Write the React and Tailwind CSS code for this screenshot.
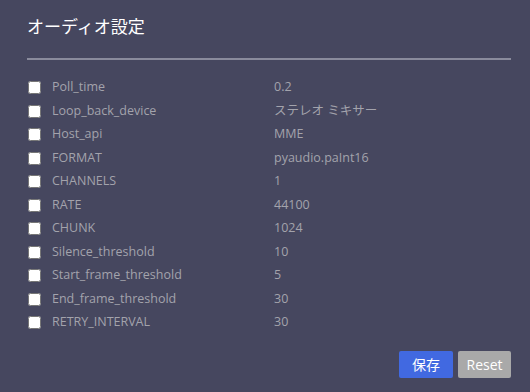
import React from "react";

const ROWS = [
  ["Poll_time", "0.2"],
  ["Loop_back_device", "ステレオ ミキサー"],
  ["Host_api", "MME"],
  ["FORMAT", "pyaudio.paInt16"],
  ["CHANNELS", "1"],
  ["RATE", "44100"],
  ["CHUNK", "1024"],
  ["Silence_threshold", "10"],
  ["Start_frame_threshold", "5"],
  ["End_frame_threshold", "30"],
  ["RETRY_INTERVAL", "30"],
];

export default function App() {
  return (
    <div
      className="w-[530px] h-[392px] bg-[#46475f] pl-[27px] pr-[19px] pt-[13px] overflow-hidden"
      style={{ fontFamily: '"Open Sans", "Noto Sans CJK JP", sans-serif' }}
    >
      <h1 className="text-[17px] leading-[26px] text-white" style={{ fontFamily: '"Noto Sans CJK JP", sans-serif' }}>
        オーディオ設定
      </h1>
      <div className="mt-[19px] h-[2px] bg-[#8a8b9c]" />
      <div className="mt-[16px] flex flex-col">
        {ROWS.map(([k, v]) => (
          <div key={k} className="flex items-center h-[23.5px] text-[12.5px] text-[#a3a3ac]">
            <input type="checkbox" className="m-0 ml-[1px] w-[13px] h-[13px]" />
            <span className="ml-[11px] w-[222px]">{k}</span>
            <span>{v}</span>
          </div>
        ))}
      </div>
      <div className="mt-[16px] flex justify-end gap-[5px]">
        <button className="w-[54px] h-[27px] rounded-[2px] bg-[#4169e1] text-white text-[14px]" style={{ fontFamily: '"Noto Sans CJK JP", sans-serif' }}>
          保存
        </button>
        <button className="w-[53px] h-[27px] rounded-[2px] bg-[#a9a9a9] text-white text-[14px]">
          Reset
        </button>
      </div>
    </div>
  );
}
